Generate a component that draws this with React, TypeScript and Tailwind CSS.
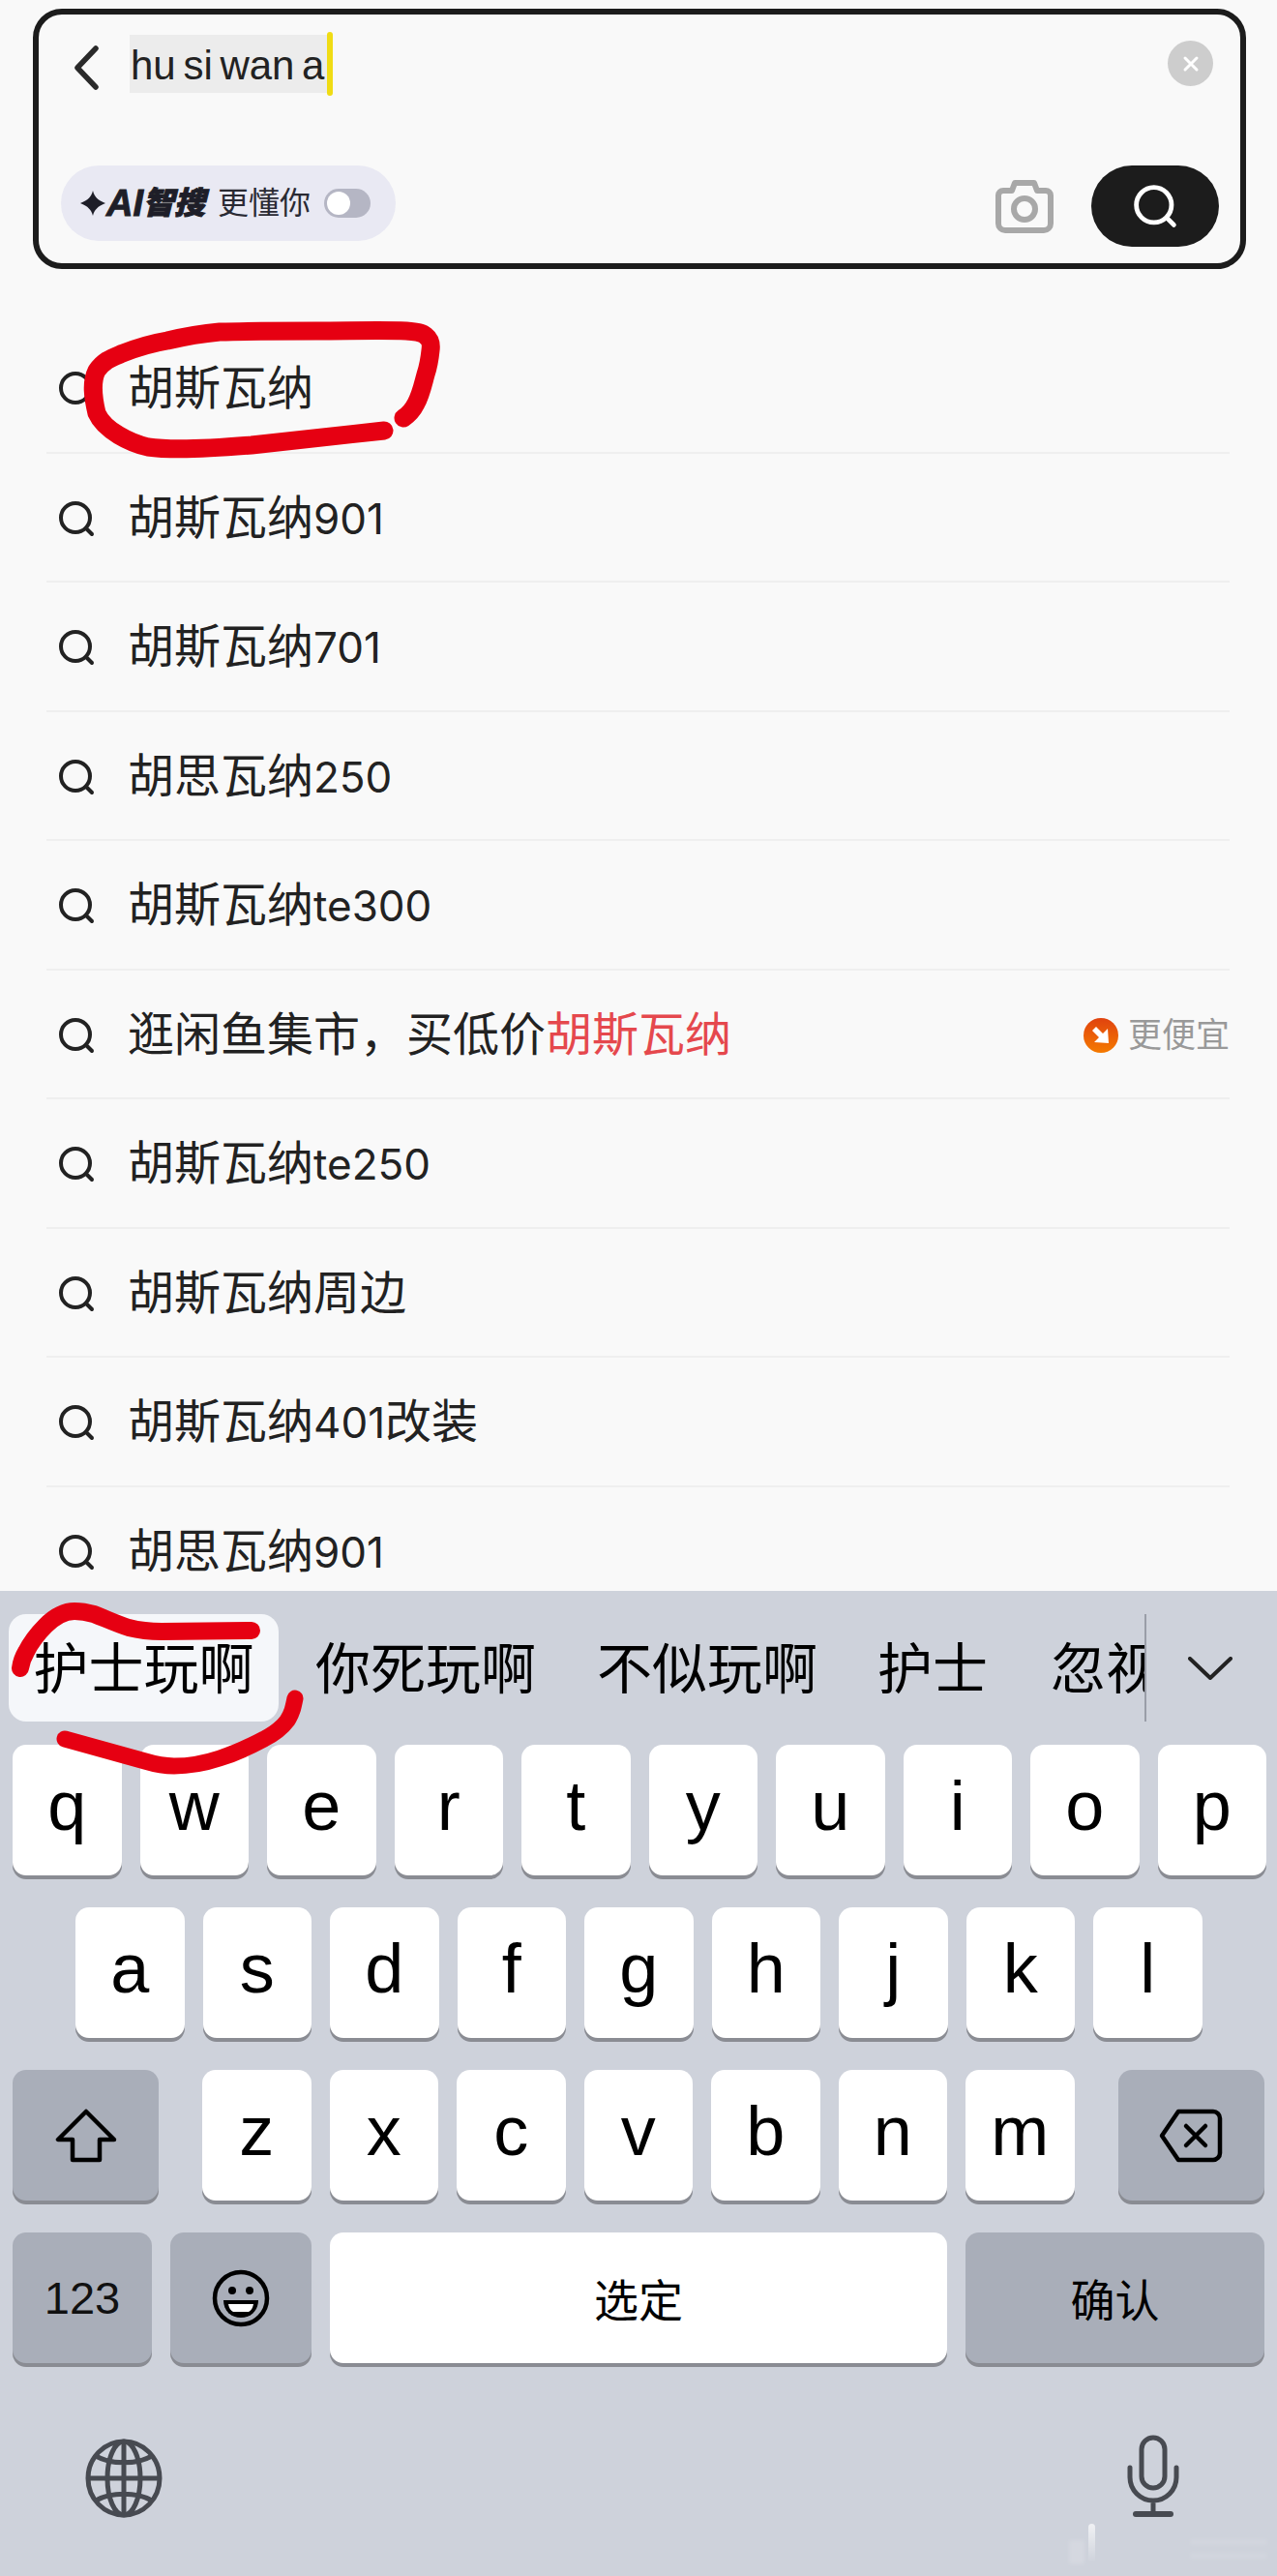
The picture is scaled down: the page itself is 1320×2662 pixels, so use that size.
import React from 'react'

const CJK = `font-['Liberation_Sans','Noto_Sans_CJK_SC',sans-serif]`

const rows: { text: string; hot?: boolean }[] = [
  { text: '胡斯瓦纳' },
  { text: '胡斯瓦纳901' },
  { text: '胡斯瓦纳701' },
  { text: '胡思瓦纳250' },
  { text: '胡斯瓦纳te300' },
  { text: '逛闲鱼集市，买低价', hot: true },
  { text: '胡斯瓦纳te250' },
  { text: '胡斯瓦纳周边' },
  { text: '胡斯瓦纳401改装' },
  { text: '胡思瓦纳901' },
]

function SearchIcon({ className = '', color = '#222' }: { className?: string; color?: string }) {
  return (
    <svg viewBox="0 0 38 38" className={className} fill="none" stroke={color} strokeWidth="4" strokeLinecap="round">
      <circle cx="18" cy="18" r="15" />
      <path d="M29 29l6 6" />
    </svg>
  )
}

function Key({ label, className = 'w-[112.5px] bg-white' }: { label: React.ReactNode; className?: string }) {
  return (
    <div className={`h-[135px] rounded-[14px] shadow-[0_4px_0_#8a8c93] flex items-center justify-center text-black shrink-0 ${className}`}>
      {label}
    </div>
  )
}

function Letters({ keys }: { keys: string[] }) {
  return (
    <>
      {keys.map((k) => (
        <Key key={k} label={<span className="text-[72px] leading-none font-['Liberation_Sans',sans-serif] relative top-[-5px]">{k}</span>} />
      ))}
    </>
  )
}

// 数字和字母用另一个字体，字号也小一点
function RowText({ text }: { text: string }) {
  return (
    <>
      {text.split(/([a-z0-9]+)/).map((part, i) =>
        /^[a-z0-9]+$/.test(part) ? (
          <span key={i} className="font-['Inter',sans-serif] text-[44px]">{part}</span>
        ) : (
          <span key={i}>{part}</span>
        ),
      )}
    </>
  )
}

export default function App() {
  return (
    <div className={`relative w-[1320px] h-[2662px] overflow-hidden bg-[#f9f9f9] flex flex-col ${CJK}`}>
      {/* 搜索框 */}
      <div className="h-[335px] pt-[9px] pl-[34px] shrink-0">
        <div className="relative w-[1254px] h-[269px] border-[6px] border-[#1c1c1c] rounded-[30px] flex flex-col justify-between pl-[23px] pr-[22px] pb-[17px] pt-[18px]">
          <div className="flex items-start">
            <svg viewBox="0 0 26 46" className="w-[26px] h-[46px] mt-[14px] ml-[13px]" fill="none" stroke="#2a2a2a" strokeWidth="5.5" strokeLinecap="round" strokeLinejoin="round">
              <path d="M23 3L4 23l19 20" />
            </svg>
            <div className="ml-[32px] h-[60px] mt-[3px] bg-[#ececec] flex items-center w-[204px] pl-[1px] relative">
              <span className="text-[42px] text-[#222] leading-none [word-spacing:-4px] whitespace-nowrap relative top-[2px]">hu si wan a</span>
              <div className="absolute left-[204px] top-[-3px] w-[6px] h-[66px] rounded-full bg-[#f0dc14]" />
            </div>
            <div className="ml-auto mr-[6px] mt-[9px] w-[47px] h-[47px] rounded-full bg-[#cdcdcd] flex items-center justify-center">
              <svg viewBox="0 0 20 20" className="w-[20px] h-[20px]" stroke="#fff" strokeWidth="3" strokeLinecap="round">
                <path d="M4 4l12 12M16 4L4 16" />
              </svg>
            </div>
          </div>
          <div className="flex items-center">
            <div className="w-[346px] h-[78px] rounded-full bg-[#e9e9f3] flex items-center pl-[20px] mb-[6px]">
              <svg viewBox="0 0 26 26" className="w-[26px] h-[26px] shrink-0">
                <path d="M13 0c1.500 6 5 10 13 13-8 3-11.500 7-13 13-1.500-6-5-10-13-13 8-3 11.500-7 13-13z" fill="#1e1e28" />
              </svg>
              <span className="ml-[1px] text-[38px] font-bold italic text-[#1e1e28] leading-none whitespace-nowrap [-webkit-text-stroke:1px_#1e1e28]">AI</span>
              <span className="text-[32px] font-black italic text-[#1e1e28] leading-none whitespace-nowrap [-webkit-text-stroke:1px_#1e1e28]">智搜</span>
              <span className="ml-[13px] text-[32px] text-[#2a2a33] leading-none whitespace-nowrap">更懂你</span>
              <div className="ml-[14px] w-[48px] h-[30px] rounded-full bg-[#b5b6c4] p-[3px]">
                <div className="w-[24px] h-[24px] rounded-full bg-white" />
              </div>
            </div>
            <svg viewBox="0 0 62 56" className="ml-auto w-[62px] h-[56px]" fill="none" stroke="#a8a8a8" strokeWidth="6" strokeLinejoin="round">
              <path d="M4 17a5 5 0 0 1 5-5h9l3-8h20l3 8h9a5 5 0 0 1 5 5v29a7 7 0 0 1-7 7H11a7 7 0 0 1-7-7z" />
              <circle cx="31" cy="31" r="11" />
            </svg>
            <div className="ml-[38px] w-[132px] h-[84px] rounded-[42px] bg-[#1c1c1c] flex items-center justify-center">
              <SearchIcon className="w-[50px] h-[46px]" color="#fff" />
            </div>
          </div>
        </div>
      </div>

      {/* 联想词 */}
      <div className="flex-1 min-h-0 overflow-hidden ml-[48px] w-[1223px]">
        {rows.map((row, i) => (
          <div key={i} className="h-[133.5px] border-b-2 border-[#efefef] flex items-center pl-[12px] pt-[3px] shrink-0">
            <SearchIcon className="w-[38px] h-[38px] shrink-0" />
            <span className="ml-[34px] text-[48px] leading-none text-[#222] whitespace-nowrap">
              <RowText text={row.text} />
              {row.hot && <span className="text-[#e5484d]">胡斯瓦纳</span>}
            </span>
            {row.hot && (
              <div className="ml-auto flex items-center">
                <svg viewBox="0 0 36 36" className="w-[36px] h-[36px]">
                  <defs>
                    <linearGradient id="cheap" x1="0" y1="0" x2="0" y2="1">
                      <stop offset="0" stopColor="#e0430f" />
                      <stop offset="1" stopColor="#f57a00" />
                    </linearGradient>
                  </defs>
                  <circle cx="18" cy="18" r="18" fill="url(#cheap)" />
                  <path d="M9 13l4-4 7 7 5-5 1 15-15-1 5-5z" fill="#fff" />
                </svg>
                <span className="ml-[10px] text-[35px] leading-none text-[#999]">更便宜</span>
              </div>
            )}
          </div>
        ))}
      </div>

      {/* 键盘 */}
      <div className="h-[1018px] shrink-0 bg-[#ced2db] pt-[24px]">
        <div className="flex items-start h-[111px]">
          <div className="flex items-center w-[1185px] pl-[9px] overflow-hidden h-[111px] border-r-2 border-[#9a9ea8] text-[57px] leading-none text-black whitespace-nowrap shrink-0">
            <div className="w-[279px] h-[111px] pt-[3px] rounded-[18px] bg-[#f5f7fa] flex items-center justify-center shrink-0">护士玩啊</div>
            <span className="ml-[38px] pt-[3px]">你死玩啊</span>
            <span className="ml-[63px] pt-[3px]">不似玩啊</span>
            <span className="ml-[62px] pt-[3px]">护士</span>
            <span className="ml-[65px] pt-[3px]">忽视</span>
          </div>
          <svg viewBox="0 0 46 24" className="ml-[43px] mt-[44px] w-[46px] h-[24px]" fill="none" stroke="#222" strokeWidth="4" strokeLinecap="round" strokeLinejoin="round">
            <path d="M2 2l21 20L44 2" />
          </svg>
        </div>

        <div className="mt-[24px] flex flex-col gap-[33px]">
          <div className="flex gap-[19px] pl-[13px]">
            <Letters keys={['q', 'w', 'e', 'r', 't', 'y', 'u', 'i', 'o', 'p']} />
          </div>
          <div className="flex gap-[19px] pl-[78px]">
            <Letters keys={['a', 's', 'd', 'f', 'g', 'h', 'j', 'k', 'l']} />
          </div>
          <div className="flex pl-[13px]">
            <Key
              className="w-[151px] bg-[#a9aeb9]"
              label={
                <svg viewBox="0 0 64 56" className="w-[64px] h-[56px]" fill="none" stroke="#000" strokeWidth="4.5" strokeLinejoin="round">
                  <path d="M32 3L3 32h15v21h28V32h15z" />
                </svg>
              }
            />
            <div className="ml-[45px] flex gap-[19px]">
              <Letters keys={['z', 'x', 'c', 'v', 'b', 'n', 'm']} />
            </div>
            <Key
              className="ml-[45px] w-[151px] bg-[#a9aeb9]"
              label={
                <svg viewBox="0 0 66 56" className="w-[66px] h-[56px]" fill="none" stroke="#000" strokeWidth="4.5" strokeLinejoin="round" strokeLinecap="round">
                  <path d="M20 3h36a7 7 0 0 1 7 7v36a7 7 0 0 1-7 7H20L3 28z" />
                  <path d="M28 18l20 20M48 18L28 38" />
                </svg>
              }
            />
          </div>
          <div className="flex gap-[19px] pl-[13px]">
            <Key className="w-[144px] bg-[#a9aeb9]" label={<span className="text-[47px] leading-none text-[#111]">123</span>} />
            <Key
              className="w-[146px] bg-[#a9aeb9]"
              label={
                <svg viewBox="0 0 60 60" className="w-[60px] h-[60px]" fill="none" stroke="#000" strokeWidth="4.5">
                  <circle cx="30" cy="30" r="27" />
                  <circle cx="21" cy="22" r="4" fill="#000" stroke="none" />
                  <circle cx="39" cy="22" r="4" fill="#000" stroke="none" />
                  <path d="M12 32h36c0 11-8 18-18 18s-18-7-18-18z" fill="#000" stroke="none" />
                  <path d="M17 36h26c-1 5-3 7-5 8H22c-2-1-4-3-5-8z" fill="#fff" stroke="none" />
                </svg>
              }
            />
            <Key className="w-[638px] bg-white" label={<span className="text-[46px] leading-none relative top-[3px]">选定</span>} />
            <Key className="w-[309px] bg-[#a9aeb9]" label={<span className="text-[46px] leading-none relative top-[3px]">确认</span>} />
          </div>
        </div>

        <div className="mt-[74px] pl-[88px] pr-[101px] flex justify-between items-end">
          <svg viewBox="0 0 80 82" className="w-[80px] h-[82px]" fill="none" stroke="#474a51" strokeWidth="5">
            <ellipse cx="40" cy="41" rx="37" ry="38" />
            <ellipse cx="40" cy="41" rx="17" ry="38" />
            <path d="M40 3v76M3 41h74M11 18c16 9 42 9 58 0M11 64c16-9 42-9 58 0" />
          </svg>
          <svg viewBox="0 0 54 86" className="w-[54px] h-[86px]" fill="none" stroke="#474a51" strokeWidth="5" strokeLinecap="round">
            <rect x="15" y="3" width="24" height="52" rx="12" />
            <path d="M3 34v10a24 24 0 0 0 48 0V34M27 68v14" />
            <path d="M9 82h36" strokeWidth="6" />
          </svg>
        </div>
      </div>

      {/* 水印残影 */}
      <div className="absolute left-[1125px] top-[2608px] w-[7px] h-[40px] rounded-sm bg-gradient-to-b from-white/70 to-white/0" />
      <div className="absolute left-[1105px] top-[2625px] w-[16px] h-[25px] bg-white/15 blur-[2px]" />
      <div className="absolute left-[1230px] top-[2624px] w-[80px] h-[6px] bg-white/10 blur-[2px]" />
      <div className="absolute left-[1230px] top-[2638px] w-[80px] h-[6px] bg-white/10 blur-[2px]" />

      {/* 红笔标注，盖在页面上面 */}
      <svg viewBox="0 0 1320 2662" className="absolute inset-0 w-[1320px] h-[2662px] pointer-events-none" fill="none" stroke="#e60012" strokeWidth="19" strokeLinecap="round" strokeLinejoin="round">
        <path d="M397 445C350 450 300 456 260 460C225 463 180 466 153 462C135 458 108 445 100 427C96 410 94 395 100 383C108 372 115 370 127 365C145 358 155 355 173 352C190 348 205 345 227 343C260 342 290 342 327 342C360 342 395 341 420 342C432 343 437 344 440 347C445 351 446 355 445 362C444 372 443 378 440 387C437 398 435 408 430 417C427 423 423 428 417 432" />
        <path d="M21 1724C22 1716 24 1712 27 1707C32 1697 40 1687 47 1680C55 1672 65 1665 77 1665C84 1665 90 1666 97 1668C110 1673 120 1678 133 1682C145 1685 155 1686 167 1686L260 1685" strokeWidth="18" />
        <path d="M305 1755C303 1765 302 1770 297 1778C291 1786 283 1792 273 1797C258 1805 243 1812 227 1817C212 1822 197 1825 180 1825C170 1825 160 1823 150 1820L67 1797" strokeWidth="17" />
      </svg>
    </div>
  )
}
